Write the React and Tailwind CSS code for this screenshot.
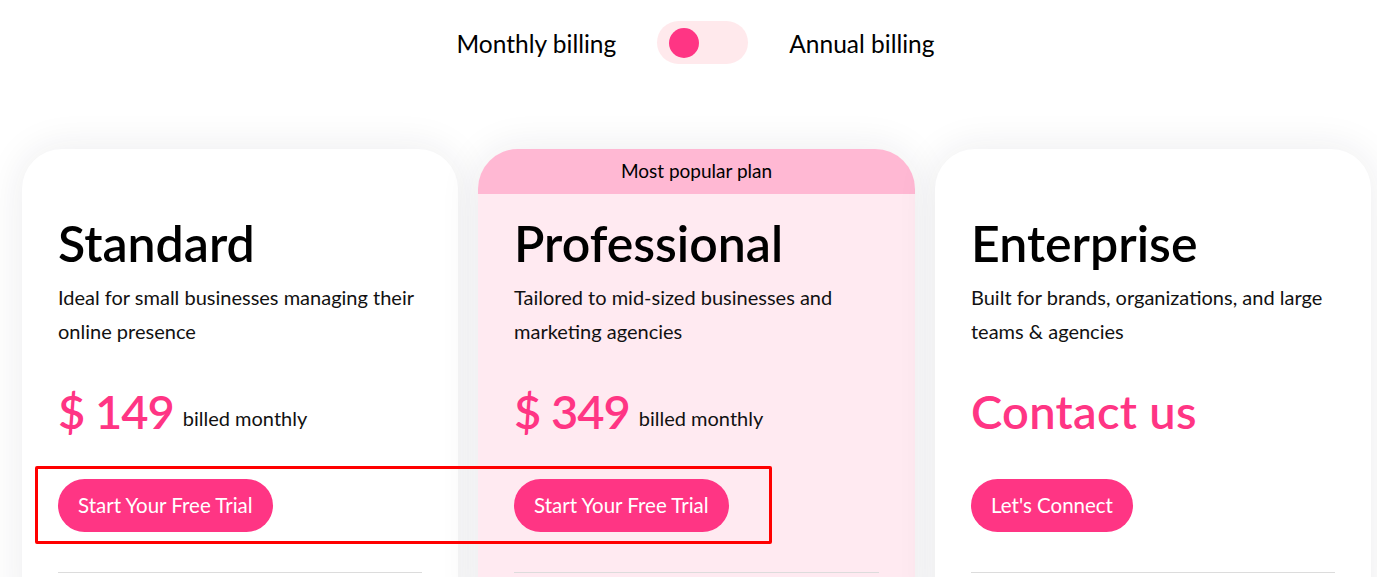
const PLANS = [
  {
    name: "Standard",
    desc: "Ideal for small businesses managing their online presence",
    price: "$ 149",
    note: "billed monthly",
    cta: "Start Your Free Trial",
  },
  {
    name: "Professional",
    desc: "Tailored to mid-sized businesses and marketing agencies",
    price: "$ 349",
    note: "billed monthly",
    cta: "Start Your Free Trial",
    popular: true,
  },
  {
    name: "Enterprise",
    desc: "Built for brands, organizations, and large teams & agencies",
    price: "Contact us",
    cta: "Let's Connect",
  },
];

function PlanCard({ plan }) {
  return (
    <div
      className={
        "rounded-t-[40px] overflow-hidden shadow-[0_0_40px_rgba(30,30,60,0.09)] " +
        (plan.popular ? "bg-[#ffeaf1]" : "bg-white")
      }
    >
      {plan.popular ? (
        <div className="h-[45px] bg-[#ffb8d3] flex items-center justify-center text-[19px] text-black">
          Most popular plan
        </div>
      ) : (
        <div className="h-[45px]" />
      )}
      <div className="px-9 pt-[20px]">
        <h2 className="text-[50px] leading-[58px] font-semibold text-black">{plan.name}</h2>
        <p className="mt-[8px] text-[20px] leading-[34px] text-[#111]">{plan.desc}</p>
        <div className="mt-[34px] flex items-baseline gap-[9px] h-[58px]">
          <span
            className={
              "text-[47px] leading-[58px] font-semibold text-[#ff3584] " +
              (plan.note ? "tracking-[-1px]" : "tracking-[0.3px]")
            }
          >
            {plan.price}
          </span>
          {plan.note && <span className="text-[20px] text-[#111] relative -top-[3px]">{plan.note}</span>}
        </div>
        <button className="mt-[39px] h-[53px] px-[20px] rounded-full bg-[#ff3584] text-white text-[20.5px]">
          {plan.cta}
        </button>
        <div className="mt-[40px] border-t border-[#dcdcdc]" />
        <div className="h-10" />
      </div>
    </div>
  );
}

export default function App() {
  return (
    <div className="relative w-[1377px] h-[577px] overflow-hidden bg-white font-['Lato',sans-serif]">
      <div className="flex items-center justify-center pt-[21px] pl-[14px]">
        <span className="text-[24.5px] text-black relative top-[2px]">Monthly billing</span>
        <div className="ml-[41px] mr-[41px] w-[91px] h-[43px] rounded-full bg-[#ffe9ec] flex items-center pl-[12px]">
          <div className="w-[30px] h-[30px] rounded-full bg-[#ff3584]" />
        </div>
        <span className="text-[24.5px] text-black relative top-[2px]">Annual billing</span>
      </div>

      <div className="mt-[85px] pl-[22px] grid grid-cols-[436px_437px_436px] gap-5">
        {PLANS.map((p) => (
          <PlanCard key={p.name} plan={p} />
        ))}
      </div>

      <div className="absolute left-[35px] top-[466px] w-[737px] h-[78px] border-[3px] border-[#ff0000] rounded-[2px]" />
    </div>
  );
}
